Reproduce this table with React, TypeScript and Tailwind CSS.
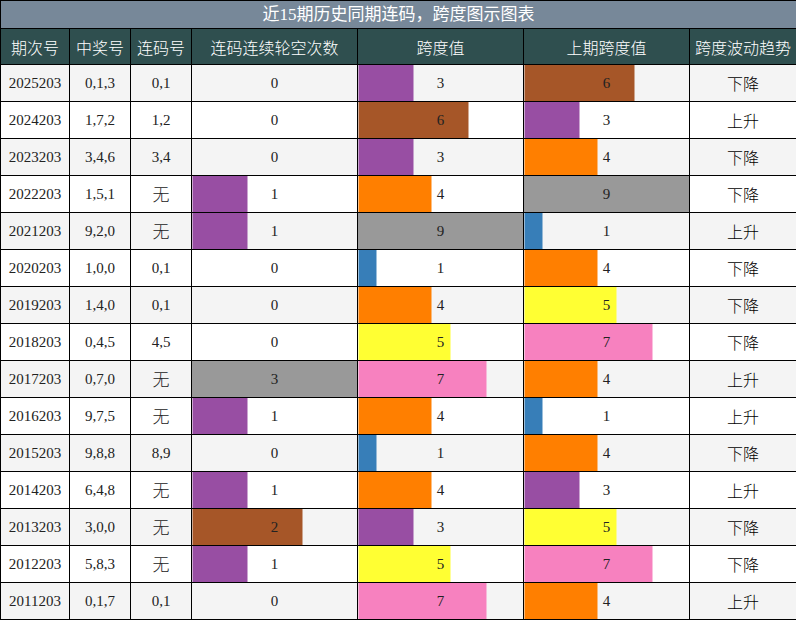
import React from 'react'

type Row = {
  issue: string
  nums: string
  pair: string
  gap: number
  span: number
  prev: number
  trend: string
}

const rows: Row[] = [
  { issue: '2025203', nums: '0,1,3', pair: '0,1', gap: 0, span: 3, prev: 6, trend: '下降' },
  { issue: '2024203', nums: '1,7,2', pair: '1,2', gap: 0, span: 6, prev: 3, trend: '上升' },
  { issue: '2023203', nums: '3,4,6', pair: '3,4', gap: 0, span: 3, prev: 4, trend: '下降' },
  { issue: '2022203', nums: '1,5,1', pair: '无', gap: 1, span: 4, prev: 9, trend: '下降' },
  { issue: '2021203', nums: '9,2,0', pair: '无', gap: 1, span: 9, prev: 1, trend: '上升' },
  { issue: '2020203', nums: '1,0,0', pair: '0,1', gap: 0, span: 1, prev: 4, trend: '下降' },
  { issue: '2019203', nums: '1,4,0', pair: '0,1', gap: 0, span: 4, prev: 5, trend: '下降' },
  { issue: '2018203', nums: '0,4,5', pair: '4,5', gap: 0, span: 5, prev: 7, trend: '下降' },
  { issue: '2017203', nums: '0,7,0', pair: '无', gap: 3, span: 7, prev: 4, trend: '上升' },
  { issue: '2016203', nums: '9,7,5', pair: '无', gap: 1, span: 4, prev: 1, trend: '上升' },
  { issue: '2015203', nums: '9,8,8', pair: '8,9', gap: 0, span: 1, prev: 4, trend: '下降' },
  { issue: '2014203', nums: '6,4,8', pair: '无', gap: 1, span: 4, prev: 3, trend: '上升' },
  { issue: '2013203', nums: '3,0,0', pair: '无', gap: 2, span: 3, prev: 5, trend: '下降' },
  { issue: '2012203', nums: '5,8,3', pair: '无', gap: 1, span: 5, prev: 7, trend: '下降' },
  { issue: '2011203', nums: '0,1,7', pair: '0,1', gap: 0, span: 7, prev: 4, trend: '上升' },
]

// palette picked by value/max scaled to 9 steps
const palette = ['#377EB8', '#4DAF4A', '#984EA3', '#FF7F00', '#FFFF33', '#A65628', '#F781BF', '#E41A1C', '#999999']

const serif = "font-['Liberation_Serif','Noto_Sans_CJK_SC',serif]"
const cjk = "font-['Noto_Sans_CJK_SC','Noto_Sans',sans-serif] font-light"

function BarCell({ value, max, bg }: { value: number; max: number; bg: string }) {
  const pct = (value / max) * 100
  const color = value > 0 ? palette[Math.round((value / max) * 9) - 1] : 'transparent'
  return (
    <td
      className={`border border-black text-center text-[15px] text-[#222] ${serif} ${bg}`}
      style={{ backgroundImage: `linear-gradient(to right, ${color} 0, ${color} ${pct}%, transparent ${pct}%)` }}
    >
      {value}
    </td>
  )
}

export default function App() {
  const heads = ['期次号', '中奖号', '连码号', '连码连续轮空次数', '跨度值', '上期跨度值', '跨度波动趋势']
  return (
    <div className="w-[796px] h-[620px] bg-white">
      <table className="w-[796px] table-fixed border-collapse">
        <colgroup>
          <col className="w-[69px]" />
          <col className="w-[61px]" />
          <col className="w-[61px]" />
          <col className="w-[166px]" />
          <col className="w-[166px]" />
          <col className="w-[166px]" />
          <col className="w-[107px]" />
        </colgroup>
        <thead>
          <tr className="h-[28px]">
            <th colSpan={7} className={`border border-black bg-[#778899] text-white text-[17px] font-normal p-0 ${serif}`}>
              近15期历史同期连码，跨度图示图表
            </th>
          </tr>
          <tr className="h-[36px]">
            {heads.map((h) => (
              <th key={h} className={`border border-black bg-[#2F4F4F] text-white text-[16px] p-0 ${cjk}`}>
                {h}
              </th>
            ))}
          </tr>
        </thead>
        <tbody>
          {rows.map((r, i) => {
            const bg = i % 2 === 0 ? 'bg-[#F4F4F4]' : 'bg-white'
            return (
              <tr key={r.issue} className="h-[37px]">
                <td className={`border border-black text-center text-[15px] text-[#222] p-0 ${serif} ${bg}`}>{r.issue}</td>
                <td className={`border border-black text-center text-[15px] text-[#222] p-0 ${serif} ${bg}`}>{r.nums}</td>
                <td
                  className={`border border-black text-center text-[#222] p-0 ${bg} ${
                    r.pair === '无' ? `text-[17px] ${cjk}` : `text-[15px] ${serif}`
                  }`}
                >
                  {r.pair}
                </td>
                <BarCell value={r.gap} max={3} bg={bg} />
                <BarCell value={r.span} max={9} bg={bg} />
                <BarCell value={r.prev} max={9} bg={bg} />
                <td className={`border border-black text-center text-[16px] text-black p-0 ${cjk} ${bg}`}>{r.trend}</td>
              </tr>
            )
          })}
        </tbody>
      </table>
    </div>
  )
}
